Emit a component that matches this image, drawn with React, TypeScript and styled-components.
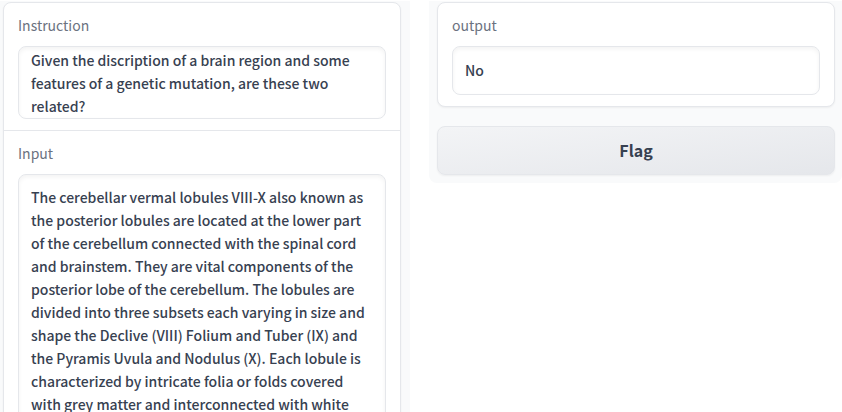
import React from "react";
import styled, { createGlobalStyle } from "styled-components";

const GlobalStyle = createGlobalStyle`
  *, *::before, *::after { box-sizing: border-box; }
  body {
    margin: 0;
    height: 100vh;
    overflow: hidden;
    background: #ffffff;
    color: #374151;
    font-family: "Source Sans Pro", "Noto Sans CJK SC", sans-serif;
    font-size: 14px;
    line-height: 23px;
  }
`;

const Page = styled.main`
  display: grid;
  grid-template-columns: minmax(0, 410fr) minmax(0, 413fr);
  column-gap: 19px;
  align-items: start;
  height: 100vh;
  overflow: hidden;
  padding-top: 1px;
`;

const Panel = styled.section<{ $side: "left" | "right" }>`
  display: flex;
  flex-direction: column;
  gap: 19px;
  padding: ${({ $side }) => ($side === "left" ? "1px 9px 8px 3px" : "1px 7px 8px 8px")};
  border-radius: 0 0 8px 8px;
  background: #f9fafb;
`;

const Card = styled.div`
  border: 1px solid #e5e7eb;
  border-radius: 8px;
  background: #ffffff;
  box-shadow: 0 1px 2px rgba(0, 0, 0, 0.05);
`;

const Field = styled.label`
  display: block;
  padding: 11px 14px;

  & + & {
    border-top: 1px solid #e5e7eb;
  }
`;

const FieldName = styled.span`
  display: block;
  margin-bottom: 9px;
  color: #6b7280;
`;

const TextBox = styled.textarea<{ $top: number; $bottom: number }>`
  display: block;
  width: 100%;
  padding: ${({ $top, $bottom }) => `${$top}px 16px ${$bottom}px 12px`};
  border: 1px solid #e5e7eb;
  border-radius: 8px;
  outline: none;
  resize: none;
  overflow: hidden;
  background: #ffffff;
  box-shadow: inset 0 2px 4px rgba(0, 0, 0, 0.05);
  color: inherit;
  font: inherit;
  font-weight: 500;
`;

const FlagButton = styled.button`
  height: 49px;
  border: 1px solid #e5e7eb;
  border-radius: 8px;
  background: linear-gradient(to bottom right, #f3f4f6, #e5e7eb);
  box-shadow: 0 1px 2px rgba(0, 0, 0, 0.05);
  color: #374151;
  font: inherit;
  font-size: 16px;
  font-weight: 600;
  cursor: pointer;
`;

const instruction =
  "Given the discription of a brain region and some features of a genetic mutation, are these two related?";

const description =
  "The cerebellar vermal lobules VIII-X also known as the posterior lobules are located at the lower part of the cerebellum connected with the spinal cord and brainstem. They are vital components of the posterior lobe of the cerebellum. The lobules are divided into three subsets each varying in size and shape the Declive (VIII) Folium and Tuber (IX) and the Pyramis Uvula and Nodulus (X). Each lobule is characterized by intricate folia or folds covered with grey matter and interconnected with white";

export default function App() {
  return (
    <>
      <GlobalStyle />
      <Page>
        <Panel $side="left">
          <Card>
            <Field>
              <FieldName>Instruction</FieldName>
              <TextBox $top={2} $bottom={0} rows={3} defaultValue={instruction} />
            </Field>
            <Field>
              <FieldName>Input</FieldName>
              <TextBox $top={11} $bottom={11} rows={14} defaultValue={description} />
            </Field>
          </Card>
        </Panel>
        <Panel $side="right">
          <Card>
            <Field>
              <FieldName>output</FieldName>
              <TextBox $top={12} $bottom={12} rows={1} readOnly value="No" />
            </Field>
          </Card>
          <FlagButton type="button">Flag</FlagButton>
        </Panel>
      </Page>
    </>
  );
}
